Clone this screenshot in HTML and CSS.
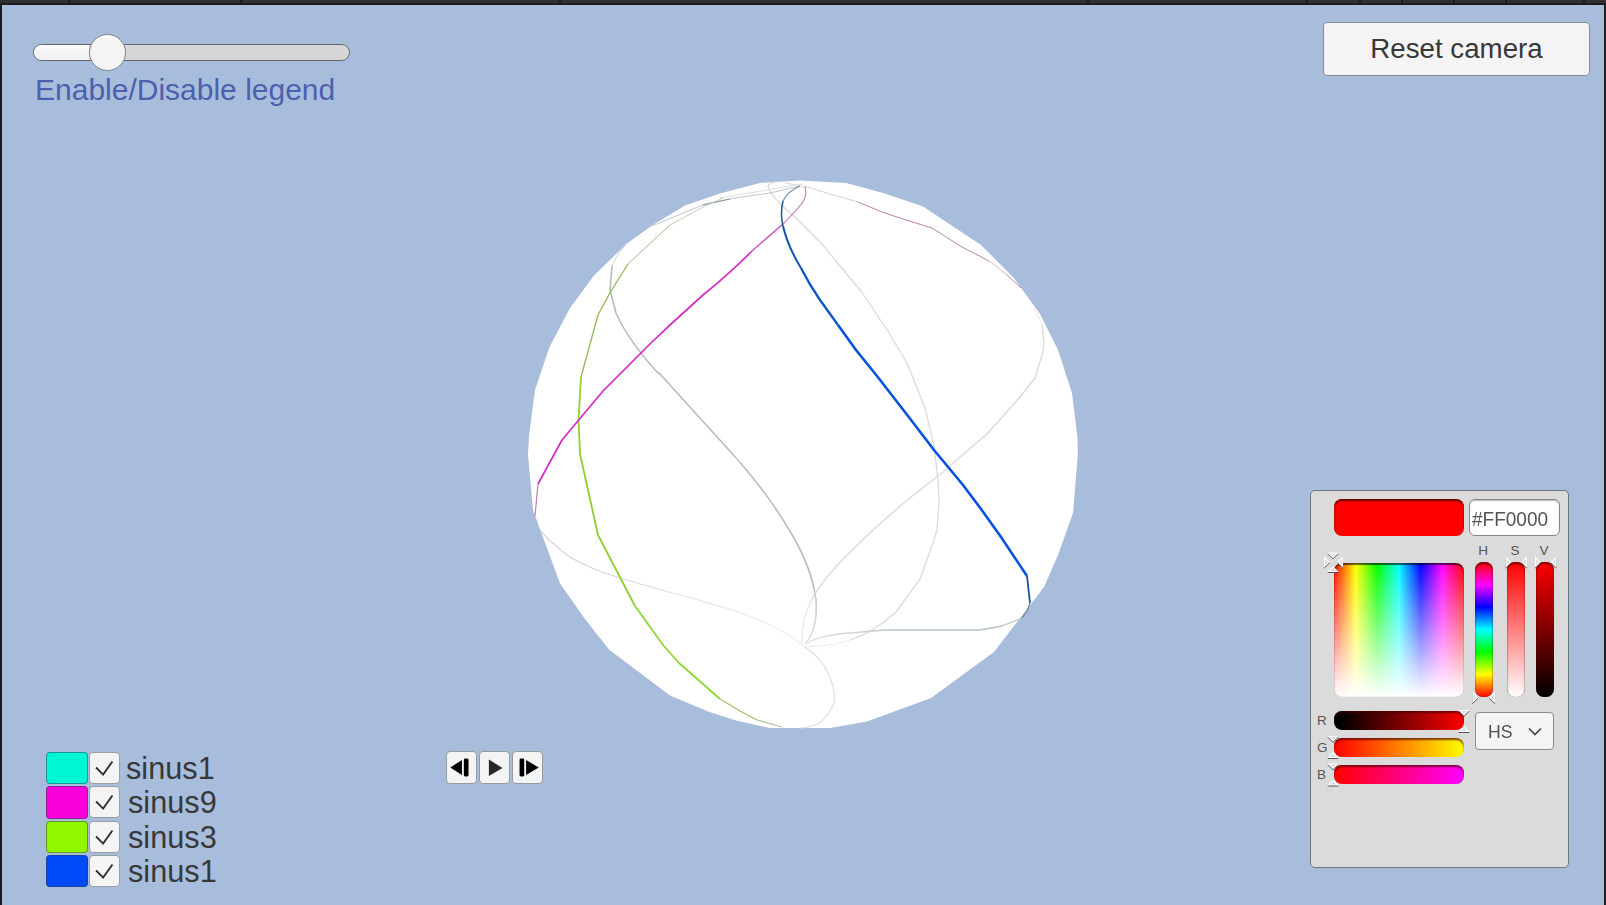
FILE: index.html
```html
<!DOCTYPE html>
<html lang="en">
<head>
<meta charset="utf-8">
<title>Sinus sphere</title>
<link rel="stylesheet" href="styles.css">
</head>
<body>
<div class="tabs"><i style="width:68px"></i><i style="width:170px"></i><i style="width:317px"></i><i style="width:526px"></i><i style="width:217px"></i><i style="width:51px"></i><i style="width:40px"></i><i style="width:50px"></i><i style="width:50px"></i><i style="width:76px"></i><i class="last"></i></div>
<main class="scene">
<svg class="globe" viewBox="520 170 566 570" width="566" height="570">
<defs>
<linearGradient id="pole" gradientUnits="userSpaceOnUse" x1="0" y1="580" x2="0" y2="645"><stop offset="0" stop-color="#b6bcbd"/><stop offset="1" stop-color="#e2e4e4"/></linearGradient>
<linearGradient id="east" gradientUnits="userSpaceOnUse" x1="805" y1="0" x2="900" y2="0"><stop offset="0" stop-color="#e6e8e8"/><stop offset="1" stop-color="#b8c1c1"/></linearGradient>
<linearGradient id="west" gradientUnits="userSpaceOnUse" x1="600" y1="0" x2="803" y2="0"><stop offset="0" stop-color="#d8d4d7"/><stop offset="1" stop-color="#efeeee"/></linearGradient>
</defs>
<polygon fill="#fff" points="761,182.700 800,180.500 846,183 885,193.500 923,206.500 981,245 1013,277 1040,314 1058,350 1072,393 1077.500,438 1077.800,455 1073,513 1058,555 1044,587 994,652 931,698 867,721.500 830,728 770,728 736,720.500 708,711.500 670,695.500 609,649.500 585,619 560,583.500 533,510 528,455 529,436 535,390 549.500,347 570,308 594,275.500 627,243.500 652,225.500 685,205.500 720,193.500"/>
<g class="thin">
<path stroke="#d0d4d5" d="M626 244L617 256 612 266"/>
<path stroke="url(#pole)" stroke-width="1.600" d="M612 266L610 290 616 313Q628 340 657 372L660 374 728 449Q766 490 791 533 812 568 816 600 818 630 805 644"/>
<path stroke="#dbdcd8" stroke-width="1.300" d="M777 182Q768 182 768 187 772 197 788 211L800 222 822 244 840 266 861 291 889 333 907 363 925 408 934 446 938 480 939 502 937 530 933 543 920 579 896 612Q873 633 850 640"/>
<path stroke="#ececeb" d="M850 640Q828 647 803 647"/>
<path stroke="#eeebed" d="M1034 308L1042 324"/>
<path stroke="#dcd7db" stroke-width="1.300" d="M1042 324L1044 342 1043 352 1035 378 1020 397 987 434 968 450 943 472 906 501 873 530 845 557Q820 583 811 601"/>
<path stroke="#e8e6e8" stroke-width="1.200" d="M811 601Q801 620 802 644"/>
<path stroke="url(#west)" stroke-width="1.200" d="M541 531L548 539 568 556Q590 569 617 577L637 583 672 593 689 597 718 606Q740 611 768 624 789 633 803 646"/>
<path stroke="#dedede" stroke-width="1.200" d="M804 647Q825 659 833 686 835 697 834 703 825 722 815 725 807 728 800 728"/>
<path stroke="url(#east)" stroke-width="1.300" d="M805 644Q820 635 850 633L885 630 980 630 1002 626 1022 618"/>
<path stroke="#c0c7ca" d="M652 226L705 204 735 198 770 193 800 186"/>
<path stroke="#809da3" d="M703 205L730 199"/>
<path stroke="#dedede" d="M720 198L755 192 803 184M785 183L807 187"/>
<path stroke="#d8d0d6" d="M804 186L830 194 858 202"/>
<path stroke="#bd82af" d="M858 202L882 212 906 220 932 228 962 247 989 261"/>
<path stroke="#cdbdca" d="M989 261L1006 274"/>
<path stroke="#bd83b6" d="M1006 274L1021 288"/>
</g>
<g class="thin">
<path stroke="#c5ceb4" d="M723 198L705 206 670 225"/>
<path stroke="#a5b98a" d="M670 225L628 264"/>
<path stroke="#97bd5c" stroke-width="1.400" d="M628 264L611 291 598 315 581 377"/>
<path stroke="#8fd030" stroke-width="1.800" d="M581 377L578.500 420 580 454 598 535 635 606"/>
<path stroke="#8ad72f" stroke-width="1.700" d="M635 606L663 645 679 663 720 699"/>
<path stroke="#9cc463" stroke-width="1.300" d="M720 699L740 711 757 720"/>
<path stroke="#afc195" stroke-width="1.200" d="M757 720L782 727"/>
<path stroke="#c389ba" stroke-width="1.200" d="M805 187Q807 194 804 200 800 207 783 224"/>
<path stroke="#c754b9" stroke-width="1.400" d="M783 224L752 251"/>
<path stroke="#d52bc4" stroke-width="1.700" d="M752 251Q728 275 703 295L670 325 652 342 603 391 562 440 538 484"/>
<path stroke="#c27bb8" stroke-width="1.200" d="M538 484L535 516"/>
<path stroke="#6f8ba0" stroke-width="1.200" d="M800 186Q788 191 783 201"/>
<path stroke="#2e5c91" stroke-width="1.600" d="M783 201Q780 214 783 226"/>
<path stroke="#1255b8" stroke-width="2" d="M783 226Q788 247 801 268"/>
<path stroke="#0c55c7" stroke-width="2.300" d="M801 268Q809 284 820 300L838 325"/>
<path stroke="#0752dc" stroke-width="2.600" d="M838 325L856 350 877 376 908 416 934 450 963 485 981 509 1001 537 1027 576"/>
<path stroke="#16549f" stroke-width="1.800" d="M1027 576L1030 603"/>
<path stroke="#6e8488" stroke-width="1.200" d="M1030 603L1027 611 1022 618"/>
</g>
</svg>
<div class="hud">
<section class="controls">
<div class="slider"><span class="fill"></span><span class="knob"></span></div>
<div class="caption">Enable/Disable legend</div>
</section>
<button class="reset">Reset camera</button>
<section class="legend">
<div class="row"><span class="swatch cyan"></span><span class="check"><svg viewBox="0 0 31 32"><path d="M6.500 15.500l7.500 7.500 10-14"/></svg></span><label>sinus1</label></div>
<div class="row"><span class="swatch magenta"></span><span class="check"><svg viewBox="0 0 31 32"><path d="M6.500 15.500l7.500 7.500 10-14"/></svg></span><label class="nudge">sinus9</label></div>
<div class="row"><span class="swatch lime"></span><span class="check"><svg viewBox="0 0 31 32"><path d="M6.500 15.500l7.500 7.500 10-14"/></svg></span><label class="nudge">sinus3</label></div>
<div class="row"><span class="swatch blue"></span><span class="check"><svg viewBox="0 0 31 32"><path d="M6.500 15.500l7.500 7.500 10-14"/></svg></span><label class="nudge">sinus1</label></div>
</section>
<section class="player">
<span class="pbtn"><svg viewBox="0 0 31 33"><path d="M3.500 16.500L16 8.500v16z"/><rect x="18" y="7" width="5" height="19" rx="1.500"/></svg></span>
<span class="pbtn"><svg viewBox="0 0 31 33"><path fill="#282828" d="M9.500 8L24 17 9.500 25.500z"/></svg></span>
<span class="pbtn"><svg viewBox="0 0 31 33"><rect x="7" y="7" width="5" height="19" rx="1.500"/><path d="M14 8.500L27.500 16.500 14 24.500z"/></svg></span>
</section>
<section class="picker">
<div class="p-top"><div class="current"></div><div class="hex"><span>#FF0000</span></div></div>
<div class="p-mid">
<div class="field"></div>
<div class="col"><b>H</b><i class="hue"></i></div>
<div class="col sat-col"><b>S</b><i class="sat"></i></div>
<div class="col val-col"><b>V</b><i class="val"></i></div>
</div>
<div class="p-low">
<div class="bars">
<div class="bar"><b>R</b><i class="red"></i></div>
<div class="bar"><b>G</b><i class="green"></i></div>
<div class="bar"><b>B</b><i class="bluebar"></i></div>
</div>
<div class="mode"><span>HS</span><svg width="14" height="9" viewBox="0 0 14 9"><path d="M1 1.500L7 7.500l6-6"/></svg></div>
</div>
<svg class="marks" viewBox="1310 490 260 378" width="260" height="378">
<defs>
<path id="down" d="M-4.500-2H4.500L0 2.500z"/><path id="up" d="M-4.500 2.500H4.500L0-2z"/>
<path id="right" d="M-2-4.500V4.500L2.500 0z"/><path id="left" d="M2.500-4.500V4.500L-2 0z"/>
</defs>
<use href="#down" x="1333" y="555"/><use href="#up" x="1333" y="569"/><use href="#right" x="1326.500" y="562"/><use href="#left" x="1340" y="562"/>
<use href="#right" x="1508" y="562"/><use href="#left" x="1524" y="562"/>
<use href="#right" x="1537.500" y="562"/><use href="#left" x="1553.500" y="562"/>
<use href="#right" x="1475" y="697.500"/><use href="#left" x="1492" y="697.500"/>
<use href="#down" x="1464" y="712.500"/><use href="#up" x="1464" y="729"/>
<use href="#down" x="1333" y="738.500"/><use href="#up" x="1333" y="755"/>
<use href="#down" x="1333" y="766"/><use href="#up" x="1333" y="782.500"/>
</svg>
</section>
</div>
</main>
</body>
</html>
```
FILE: styles.css
```css
* { box-sizing: border-box; }
body { margin: 0; width: 1606px; height: 905px; overflow: hidden; background: #1c1c1c; font-family: "Liberation Sans", Arial, sans-serif; color: #383838; }
.tabs { display: flex; gap: 2px; height: 3px; background: #1c1c1c; }
.tabs i { background: #303030; flex: none; }
.tabs .last { flex: 1; }
.scene { position: relative; margin: 2px 2px 0; height: 900px; background: #a8bddc; }
.globe { position: absolute; left: 518px; top: 165px; }
.thin path { fill: none; stroke-linejoin: round; }
.hud { position: relative; height: 900px; padding: 17px 14px 0 31px; display: grid; grid-template-columns: 412px 1fr 259px 21px; grid-template-rows: 468px 262px 1fr; }
.controls { grid-column: 1; grid-row: 1; padding-top: 22px; }
.slider { display: flex; align-items: center; width: 317px; height: 17px; border: 1.500px solid #636568; border-radius: 9px; background: #d6d6d6; }
.fill { width: 55px; height: 15px; border-radius: 8px 0 0 8px; background: linear-gradient(#fff, #f2f2f2 50%); flex: none; }
.knob { flex: none; width: 37px; height: 37px; border-radius: 50%; border: 1.500px solid #818589; background: linear-gradient(#fff, #f4f4f4 20%); }
.caption { margin: 12px 0 0 2px; font-size: 30px; line-height: 34px; color: #4c61ad; white-space: nowrap; }
.reset { grid-column: 3 / 5; grid-row: 1; justify-self: end; width: 267px; height: 54px; border: 1px solid #868b93; border-radius: 4px; background: #f4f4f4; font: 27.700px "Liberation Sans", Arial, sans-serif; color: #383838; padding: 0; }
.legend { grid-column: 1; grid-row: 3; display: flex; flex-direction: column; gap: 2px; padding-left: 13px; }
.row { display: flex; height: 32.300px; align-items: center; }
.swatch { width: 42px; height: 32.500px; border: 1px solid rgba(50, 60, 80, .5); border-radius: 4px; }
.cyan { background: #00f7d3; }
.magenta { background: #f700d9; }
.lime { background: #91f700; }
.blue { background: #004af7; }
.check { width: 31px; height: 32px; margin-left: 1px; border: 1px solid #999da4; border-radius: 4px; background: #f4f4f4; }
.check svg { display: block; width: 29px; height: 30px; fill: none; stroke: #303030; stroke-width: 2; }
.row label { font-size: 30.700px; line-height: 32px; margin-left: 6px; padding-top: 2px; }
.row .nudge { margin-left: 8px; }
.player { grid-column: 2; grid-row: 3; display: flex; gap: 2px; margin-top: -1px; padding-left: 1px; }
.pbtn { width: 31px; height: 33px; border: 1px solid #9599a0; border-radius: 4px; background: #f4f4f4; }
.pbtn svg { display: block; width: 29px; height: 31px; }
.picker { grid-column: 3; grid-row: 2 / 4; position: relative; width: 259px; height: 378px; border: 1px solid #72767d; border-radius: 5px; background: #dbdbdb; padding: 8px 0 0 23px; }
.p-top { display: flex; gap: 5px; }
.current { width: 130px; height: 37px; border-radius: 8px; background: #f00; box-shadow: inset 0 2px 2px rgba(60, 0, 0, .8); }
.hex { width: 91px; height: 37px; border: 1px solid #888; border-radius: 6px; background: #fff; padding-left: 2px; font-size: 20px; line-height: 38px; color: #555; box-shadow: inset 0 1px 1px #bbb; }
.hex span { display: inline-block; transform: scaleX(.95); transform-origin: 0 50%; }
.p-mid { display: flex; align-items: flex-end; height: 161px; }
.field { width: 130px; height: 134px; border-radius: 8px; background: linear-gradient(transparent, #fff), linear-gradient(90deg, red, #ff0, lime, cyan, blue, magenta, red); box-shadow: inset 0 2px 1px rgba(0, 0, 0, .6), inset 0 0 1px rgba(0, 0, 0, .5); }
.col { display: flex; flex-direction: column; align-items: center; width: 18px; margin-left: 11px; }
.sat-col { margin-left: 14px; }
.val-col { margin-left: 11px; }
.col b, .bar b { font-size: 13.500px; font-weight: 400; line-height: 16px; color: #555; }
.col b { transform: translateX(-1px); }
.col i { display: block; width: 18px; height: 135px; margin-top: 3px; border-radius: 8px; box-shadow: inset 0 2px 2px rgba(80, 0, 0, .7), inset 0 0 1px rgba(0, 0, 0, .6); }
.hue { background: linear-gradient(red, magenta, blue, cyan, lime, yellow, red); }
.sat { background: linear-gradient(red, white); }
.val { background: linear-gradient(red, black); }
.p-low { display: flex; margin-left: -17px; padding-top: 14px; }
.bars { display: flex; flex-direction: column; gap: 7.300px; }
.bar { display: flex; align-items: center; height: 19.500px; }
.bar b { width: 17px; padding-top: 1px; }
.bar i { width: 130px; height: 19px; border-radius: 8px; box-shadow: inset 0 2px 2px rgba(70, 0, 0, .7); }
.red { background: linear-gradient(90deg, #000 5%, red); }
.green { background: linear-gradient(90deg, red, yellow); }
.bluebar { background: linear-gradient(90deg, red, magenta); }
.mode { display: flex; align-items: center; justify-content: space-between; width: 79px; height: 38px; margin: 1px 0 0 11px; padding: 1px 11px 0 12px; border: 1px solid #888b91; border-radius: 4px; background: #f4f4f4; font-size: 19px; color: #505050; }
.mode span { transform: scaleX(.93); transform-origin: 0 50%; }
.mode path { fill: none; stroke: #444; stroke-width: 1.700; }
.marks { position: absolute; left: -1px; top: -1px; fill: #dcdcdc; stroke: #fff; stroke-width: 1.100; filter: drop-shadow(.5px 1px .5px #555); }
```
